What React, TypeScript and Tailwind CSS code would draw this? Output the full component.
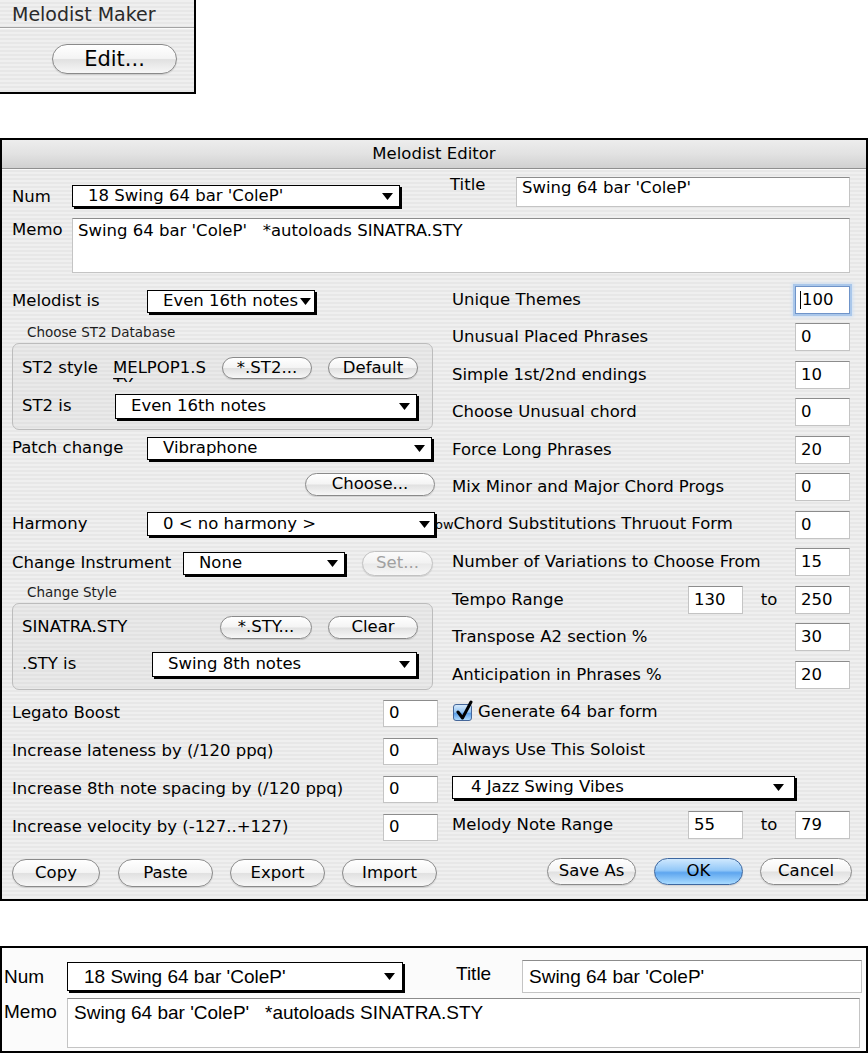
import React from "react";

const STRIPES =
  "bg-[image:repeating-linear-gradient(180deg,#efefef_0px,#efefef_2px,#e7e7e7_2px,#e7e7e7_4px)]";
const GROUP =
  "border border-[#bcbcbc] rounded-[7px] bg-[image:repeating-linear-gradient(180deg,#e9e9e9_0px,#e9e9e9_2px,#e2e2e2_2px,#e2e2e2_4px)]";

function Tri({ className = "" }: { className?: string }) {
  return (
    <svg width="11" height="7" viewBox="0 0 11 7" className={className}>
      <path d="M0 0 H11 L5.5 7 Z" fill="#000" />
    </svg>
  );
}

function Popup({
  className = "",
  text,
  textClass = "pl-[15px]",
  triClass = "mr-[6px]",
}: {
  className?: string;
  text: string;
  textClass?: string;
  triClass?: string;
}) {
  return (
    <div
      className={`flex items-center bg-white border border-black shadow-[2px_2px_0_#000] ${className}`}
    >
      <span className={`flex-1 whitespace-nowrap overflow-hidden ${textClass}`}>{text}</span>
      <Tri className={`shrink-0 ${triClass}`} />
    </div>
  );
}

function Field({
  className = "",
  children,
}: {
  className?: string;
  children?: React.ReactNode;
}) {
  return (
    <div
      className={`flex items-center bg-white border border-[#c4c4c4] border-t-[#8c8c8c] pl-[5px] whitespace-nowrap ${className}`}
    >
      {children}
    </div>
  );
}

function Btn({
  className = "",
  children,
  disabled = false,
  primary = false,
}: {
  className?: string;
  children: React.ReactNode;
  disabled?: boolean;
  primary?: boolean;
}) {
  const look = primary
    ? "border-[#3d67a0] bg-[linear-gradient(180deg,#cfe8fe_0%,#93c8f8_45%,#5ea6ef_55%,#a9dbff_100%)] text-black"
    : disabled
    ? "border-[#c2c2c2] bg-[linear-gradient(180deg,#fbfbfb_0%,#f2f2f2_48%,#e9e9e9_52%,#f6f6f6_100%)] text-[#a0a0a0]"
    : "border-[#8a8a8a] bg-[linear-gradient(180deg,#ffffff_0%,#f4f4f4_48%,#e1e1e1_52%,#f7f7f7_100%)] text-black";
  return (
    <div
      className={`flex items-center justify-center rounded-full border shadow-[0_1px_1px_rgba(0,0,0,0.12)] whitespace-nowrap ${look} ${className}`}
    >
      {children}
    </div>
  );
}

function LField({ label, value }: { label: string; value: string }) {
  return (
    <div className="h-[38px] flex items-center pr-[12px]">
      <span className="flex-1 whitespace-nowrap">{label}</span>
      <Field className="w-[55px] h-[27px]">{value}</Field>
    </div>
  );
}

function RRow({ label, value }: { label: React.ReactNode; value?: string }) {
  return (
    <div className="h-[37.5px] flex items-center pl-[2px] pr-[2px]">
      <span className="flex-1 whitespace-nowrap">{label}</span>
      {value !== undefined && <Field className="w-[55px] h-[28px]">{value}</Field>}
    </div>
  );
}

function RangeRow({ label, a, b }: { label: string; a: string; b: string }) {
  return (
    <div className="h-[37.5px] flex items-center pl-[2px] pr-[2px]">
      <span className="flex-1 whitespace-nowrap">{label}</span>
      <Field className="w-[55px] h-[28px]">{a}</Field>
      <span className="w-[52px] text-center">to</span>
      <Field className="w-[55px] h-[28px]">{b}</Field>
    </div>
  );
}

export default function App() {
  return (
    <div className="w-[868px] h-[1054px] bg-white overflow-hidden font-['DejaVu_Sans',sans-serif] text-[16.5px] leading-[20px] text-black">
      {/* Melodist Maker panel */}
      <div className={`w-[196px] h-[94px] border-r-2 border-b-2 border-black ${STRIPES}`}>
        <div className="h-[28px] flex items-center pl-[12px] text-[19px] text-[#2a2a2a] border-b border-[#a3a3a3] shadow-[0_1px_0_#fafafa]">
          Melodist Maker
        </div>
        <div className="pl-[52px] pt-[16px]">
          <Btn className="w-[125px] h-[30px] text-[21px]">Edit...</Btn>
        </div>
      </div>

      {/* Melodist Editor dialog */}
      <div className={`mt-[44px] w-[868px] border-2 border-black ${STRIPES}`}>
        <div className="h-[29px] flex items-center justify-center border-b border-[#8f8f8f] bg-[linear-gradient(180deg,#ededed_0%,#e2e2e2_50%,#d0d0d0_100%)] shadow-[0_1px_0_#f8f8f8]">
          Melodist Editor
        </div>

        <div className="pl-[10px] pt-[6px]">
          {/* Num / Title */}
          <div className="flex items-start">
            <span className="w-[60px] mt-[13px] leading-[18px]">Num</span>
            <Popup className="w-[328px] h-[22px] mt-[10px]" text="18 Swing 64 bar 'ColeP'" />
            <span className="ml-[50px] w-[66px] leading-[18px] mt-[1px]">Title</span>
            <Field className="w-[334px] h-[30px] mt-[2px] !items-start leading-[18px] pt-[1px]">
              Swing 64 bar 'ColeP'
            </Field>
          </div>

          {/* Memo */}
          <div className="flex items-start mt-[11px]">
            <span className="w-[60px] mt-[3px] leading-[18px]">Memo</span>
            <Field className="w-[778px] h-[55px] !items-start pt-[3px] leading-[18px]">
              Swing 64 bar 'ColeP'&nbsp;&nbsp;&nbsp;*autoloads SINATRA.STY
            </Field>
          </div>

          {/* Two columns */}
          <div className="flex mt-[8px]">
            {/* Left column */}
            <div className="w-[438px] flex flex-col">
              <div className="h-[40px] flex items-center">
                <span className="w-[135px]">Melodist is</span>
                <Popup
                  className="w-[168px] h-[23px]"
                  text="Even 16th notes"
                  triClass="mr-[3px]"
                />
              </div>
              <div className="h-[22px] flex items-center pl-[15px] text-[13.5px] text-[#1e1e1e]">
                Choose ST2 Database
              </div>
              <div className={`w-[421px] pt-[5px] pb-[4px] pl-[9px] ${GROUP}`}>
                <div className="h-[38px] flex items-center">
                  <span className="w-[91px]">ST2 style</span>
                  <div className="self-start mt-[10px] w-[109px] h-[23px] overflow-hidden">
                    <div className="w-[100px] break-all leading-[17px]">MELPOP1.STY</div>
                  </div>
                  <Btn className="w-[90px] h-[22px]">*.ST2...</Btn>
                  <Btn className="ml-[16px] w-[90px] h-[22px]">Default</Btn>
                </div>
                <div className="h-[38px] flex items-center">
                  <span className="w-[93px]">ST2 is</span>
                  <Popup className="w-[302px] h-[25px]" text="Even 16th notes" />
                </div>
              </div>
              <div className="h-[36px] flex items-center">
                <span className="w-[135px]">Patch change</span>
                <Popup className="w-[285px] h-[23px]" text="Vibraphone" />
              </div>
              <div className="h-[36px] flex items-center pl-[293px]">
                <Btn className="w-[130px] h-[23px]">Choose...</Btn>
              </div>
              <div className="h-[44px] flex items-center">
                <span className="w-[135px]">Harmony</span>
                <Popup
                  className="relative z-10 w-[288px] h-[24px]"
                  text="0 < no harmony >"
                  triClass="mr-[4px]"
                />
              </div>
              <div className="h-[34px] flex items-center">
                <span className="w-[171px] whitespace-nowrap">Change Instrument</span>
                <Popup className="w-[162px] h-[23px]" text="None" />
                <Btn disabled className="ml-[17px] w-[71px] h-[25px]">
                  Set...
                </Btn>
              </div>
              <div className="h-[23px] flex items-center pl-[15px] text-[13.5px] text-[#1e1e1e]">
                Change Style
              </div>
              <div className={`w-[421px] pt-[5px] pb-[6px] pl-[9px] ${GROUP}`}>
                <div className="h-[36px] flex items-center">
                  <span className="w-[198px]">SINATRA.STY</span>
                  <Btn className="w-[92px] h-[23px]">*.STY...</Btn>
                  <Btn className="ml-[16px] w-[90px] h-[23px]">Clear</Btn>
                </div>
                <div className="h-[38px] flex items-center">
                  <span className="w-[130px]">.STY is</span>
                  <Popup className="w-[265px] h-[25px]" text="Swing 8th notes" />
                </div>
              </div>
              <div className="mt-[4px]">
                <LField label="Legato Boost" value="0" />
                <LField label="Increase lateness by (/120 ppq)" value="0" />
                <LField label="Increase 8th note spacing by (/120 ppq)" value="0" />
                <LField label="Increase velocity by (-127..+127)" value="0" />
              </div>
              <div className="h-[53px] flex items-center">
                <Btn className="w-[88px] h-[28px]">Copy</Btn>
                <Btn className="ml-[18px] w-[95px] h-[28px]">Paste</Btn>
                <Btn className="ml-[17px] w-[95px] h-[28px]">Export</Btn>
                <Btn className="ml-[17px] w-[95px] h-[28px]">Import</Btn>
              </div>
            </div>

            {/* Right column */}
            <div className="w-[402px] flex flex-col">
              <div className="h-[37.5px] flex items-center pl-[2px] pr-[2px]">
                <span className="flex-1">Unique Themes</span>
                <Field className="w-[55px] h-[28px] !border-[#6f94c9] shadow-[0_0_0_2px_#aac7ea,0_0_3px_3px_#cfe0f4] !pl-[4px]">
                  <span className="w-px h-[18px] bg-black mr-[1px]" />
                  100
                </Field>
              </div>
              <RRow label="Unusual Placed Phrases" value="0" />
              <RRow label="Simple 1st/2nd endings" value="10" />
              <RRow label="Choose Unusual chord" value="0" />
              <RRow label="Force Long Phrases" value="20" />
              <RRow label="Mix Minor and Major Chord Progs" value="0" />
              <RRow
                label={
                  <>
                    <span className="-ml-[17px] text-[13px]">ow</span>Chord Substitutions Thruout Form
                  </>
                }
                value="0"
              />
              <RRow label="Number of Variations to Choose From" value="15" />
              <RangeRow label="Tempo Range" a="130" b="250" />
              <RRow label="Transpose A2 section %" value="30" />
              <RRow label="Anticipation in Phrases %" value="20" />
              <div className="h-[37.5px] flex items-center pl-[2px]">
                <div className="relative ml-[1px] mr-[6px] w-[19px] h-[17px] rounded-[3px] border border-[#45679a] bg-[linear-gradient(180deg,#d6eafc_0%,#93c3f2_48%,#5b9fe8_56%,#acd8fc_100%)]">
                  <svg
                    className="absolute -top-[5px] left-[1px]"
                    width="18"
                    height="21"
                    viewBox="0 0 18 21"
                  >
                    <path
                      d="M3 12 L7.5 18 L16 2"
                      stroke="#000"
                      strokeWidth="3"
                      fill="none"
                      strokeLinecap="round"
                      strokeLinejoin="round"
                    />
                  </svg>
                </div>
                <span>Generate 64 bar form</span>
              </div>
              <RRow label="Always Use This Soloist" />
              <div className="h-[37.5px] flex items-center pl-[2px]">
                <Popup
                  className="w-[343px] h-[23px]"
                  text="4 Jazz Swing Vibes"
                  textClass="pl-[18px]"
                  triClass="mr-[10px]"
                />
              </div>
              <RangeRow label="Melody Note Range" a="55" b="79" />
              <div className="h-[55px] flex items-center pl-[97px]">
                <Btn className="w-[90px] h-[27px]">Save As</Btn>
                <Btn primary className="ml-[18px] w-[90px] h-[27px]">
                  OK
                </Btn>
                <Btn className="ml-[17px] w-[93px] h-[27px]">Cancel</Btn>
              </div>
            </div>
          </div>
        </div>
      </div>

      {/* Bottom panel */}
      <div className="mt-[45px] w-[868px] h-[107px] border-2 border-black bg-[#fbfbfb] pl-[2px] pt-[12px] font-['Liberation_Sans_Narrow','Liberation_Sans',sans-serif] text-[19px] leading-[22px]">
        <div className="flex items-center">
          <span className="w-[63px]">Num</span>
          <Popup
            className="w-[336px] h-[29px]"
            text="18 Swing 64 bar 'ColeP'"
            textClass="pl-[16px]"
            triClass="mr-[7px]"
          />
          <span className="ml-[53px] w-[66px] -mt-[6px]">Title</span>
          <Field className="w-[340px] h-[33px] !pl-[6px]">Swing 64 bar 'ColeP'</Field>
        </div>
        <div className="flex items-start mt-[5px]">
          <span className="w-[63px] pt-[3px]">Memo</span>
          <Field className="w-[793px] h-[50px] !items-start pt-[3px] !pl-[6px]">
            Swing 64 bar 'ColeP'&nbsp;&nbsp;&nbsp;*autoloads SINATRA.STY
          </Field>
        </div>
      </div>
    </div>
  );
}
